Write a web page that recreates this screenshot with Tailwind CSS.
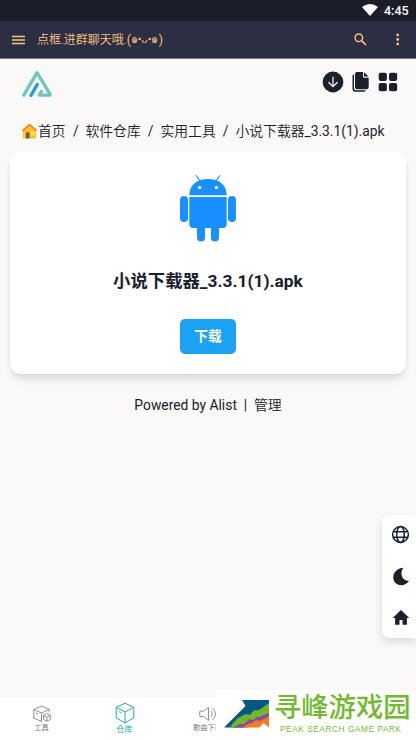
<!DOCTYPE html>
<html lang="zh-CN">
<head>
<meta charset="utf-8">
<meta name="viewport" content="width=device-width, initial-scale=1">
<title>小说下载器_3.3.1(1).apk</title>
<script src="https://cdn.jsdelivr.net/npm/@tailwindcss/browser@4"></script>
</head>
<body class="relative flex h-[740px] w-[416px] flex-col overflow-hidden bg-[#faf9f7] font-[Roboto,'Noto_Sans_CJK_SC',sans-serif] text-[#1a202c]">
<div class="flex h-[21px] shrink-0 items-center justify-end bg-[#1b1d28] pr-[7px] text-white">
  <svg class="mr-[6px] mb-[1px] h-[12px] w-[16px]" viewBox="0 0 16 12"><path fill="currentColor" d="M0 3Q8-3 16 3L8 12Z"/></svg>
  <span class="w-[25px] text-[12.5px] leading-[21px] font-medium whitespace-nowrap">4:45</span>
</div>
<div class="flex h-[38px] shrink-0 items-center border-b border-[#777783] bg-[#2c2e43] pl-[12px] text-[#f9c57e]">
  <svg class="h-[10px] w-[13px]" viewBox="0 0 13 10"><path stroke="currentColor" stroke-width="1.4" d="M0 1.5h13M0 5h13M0 8.5h13"/></svg>
  <span class="ml-[12px] flex w-[300px] pt-px text-[12px] leading-[18px] whitespace-nowrap"><span class="font-[350]">点框.进群聊天哦.</span><span>(</span><span class="w-[28px] text-[11px]">๑•ᴗ•๑</span><span>)</span></span>
  <svg class="ml-[17px] h-[13px] w-[13px]" viewBox="0 0 13 13" fill="none" stroke="currentColor"><circle cx="4.8" cy="4.8" r="3.8" stroke-width="1.4"/><path stroke-width="1.7" d="m7.8 7.8 4.200 4.200"/></svg>
  <svg class="ml-[29px] h-[13px] w-[4px]" viewBox="0 0 4 13" fill="currentColor"><circle cx="1.700" cy="2" r="1.400"/><circle cx="1.700" cy="6.500" r="1.400"/><circle cx="1.700" cy="11" r="1.400"/></svg>
</div>
<header class="flex h-[49px] shrink-0 items-center justify-between pr-[18px] pl-[21px]">
  <svg class="h-[28px] w-[32px]" viewBox="0 0 32 28" fill="none" stroke-linecap="round" stroke-linejoin="round" stroke-width="3.3"><path stroke="#70c6be" d="M2.800 25.200 16 2.700 29 24.200Q29.400 25.200 28.300 25.200H18.200L20.300 21.600"/><path stroke="#1ba0d8" d="M10 25.300 16.300 14.500"/></svg>
  <div class="mb-[4px] flex items-center">
    <svg class="h-[22px] w-[22px]" viewBox="0 0 22 22"><circle cx="11" cy="11" r="10.400" fill="#1a202c"/><path d="M11 6v9.500M6.800 11.500l4.200 4.200 4.200-4.200" fill="none" stroke="white" stroke-width="1.200" stroke-linecap="round" stroke-linejoin="round"/></svg>
    <svg class="ml-[8px] h-[20px] w-[17px]" viewBox="0 0 17 20" fill="#1a202c"><path d="M5 0h6v4.500q0 1.200 1.200 1.200H16.700v9.500q0 2-2 2H5q-2 0-2-2V2q0-2 2-2Z"/><path d="m12 .3 4.500 4.200H12Z"/><path d="M.5 3.700q0-1.200 1.500-1.200V16q0 2.200 2.200 2.200h9.500Q13.400 19.700 12 19.700H3.500q-3 0-3-3Z"/></svg>
    <svg class="ml-[9px] h-[20px] w-[20px]" viewBox="0 0 20 20" fill="#1a202c"><rect x=".7" y=".8" width="8.200" height="8.200" rx="2"/><rect x="11" y=".8" width="8.200" height="8.200" rx="2"/><rect x=".7" y="11" width="8.200" height="8.200" rx="2"/><rect x="11" y="11" width="8.200" height="8.200" rx="2"/></svg>
  </div>
</header>
<nav class="mt-[13px] flex h-[20px] shrink-0 items-center pl-[22px] text-[13.800px] leading-[20px] whitespace-nowrap">
  <svg class="h-[16px] w-[15px] shrink-0" viewBox="0 0 15 16"><path fill="#fcc21b" d="M1 7 7.500 1.500 14 7v8.500H1Z"/><path fill="none" stroke="#f57836" stroke-width="1.600" stroke-linecap="round" d="M.9 7.300 7.500 1.500l6.600 5.800"/><path fill="#6d5360" d="M4 9.400h3.500v6H4z"/><path fill="#fff3b4" d="M9.200 8.600h3.500v3.700H9.200z"/><path stroke="#f4b81c" stroke-width=".6" d="M11 8.600v3.700M9.200 10.400h3.500"/></svg>
  <span class="ml-[1px] w-[28px] font-[350]">首页</span>
  <span class="w-[19.500px] text-center">/</span>
  <span class="w-[55px] font-[350]">软件仓库</span>
  <span class="w-[20px] text-center">/</span>
  <span class="w-[55px] font-[350]">实用工具</span>
  <span class="w-[20px] text-center">/</span>
  <span><span class="font-[350]">小说下载器</span>_3.3.1(1).apk</span>
</nav>
<main class="mx-[10px] mt-[11px] flex h-[222px] w-[396px] shrink-0 flex-col items-center rounded-[11px] bg-white pt-[23px] shadow-[0_7px_10px_-2px_rgba(0,0,0,0.11),0_2px_4px_-1px_rgba(0,0,0,0.07)]">
  <svg class="h-[67px] w-[56px] shrink-0" viewBox="0 0 56 67" fill="#1890ff"><path d="M9.300 20.200C9.300 10.300 16.400 4 28 4s18.700 6.300 18.700 16.200Z"/><path d="m16.500.7 3.200 5M39.500.7l-3.200 5" stroke="#1890ff" stroke-width="1.200" stroke-linecap="round"/><circle cx="19.500" cy="12.600" r="1.700" fill="white"/><circle cx="36.500" cy="12.600" r="1.700" fill="white"/><path d="M9.300 22h37.400v27q0 4-4 4H13.300q-4 0-4-4Z"/><rect x="0" y="21" width="8" height="26" rx="4"/><rect x="48" y="21" width="8" height="26" rx="4"/><rect x="17" y="47" width="8" height="19.500" rx="4"/><rect x="31" y="47" width="8" height="19.500" rx="4"/></svg>
  <h1 class="mt-[26px] text-[17.350px] leading-[26px] font-bold whitespace-nowrap">小说下载器_3.3.1(1).apk</h1>
  <button class="mt-[25px] h-[35px] w-[56px] shrink-0 rounded-[5px] bg-[#1da1f2] text-[13.800px] leading-[35px] font-bold text-white">下载</button>
</main>
<footer class="mt-[20px] flex h-[22px] items-center justify-center text-[13.850px] whitespace-nowrap"><span>Powered by Alist</span><span class="w-[17px] text-center">|</span><span class="font-[350]">管理</span></footer>
<aside class="absolute top-[515px] right-0 flex h-[123px] w-[34.500px] flex-col items-center justify-between rounded-l-[7px] bg-white py-[10px] pl-[4px] shadow-[0_4px_8px_rgba(0,0,0,0.12)]">
  <svg class="h-[19px] w-[19px]" viewBox="0 0 19 19" fill="none" stroke="#1a202c" stroke-width="1.500"><circle cx="9.500" cy="9.500" r="7.900"/><ellipse cx="9.500" cy="9.500" rx="3.800" ry="7.900"/><path d="M2.500 6.700h14M2.500 12.300h14"/></svg>
  <svg class="mb-[1px] h-[19px] w-[18px]" viewBox="0 0 18 19" fill="#1a202c"><path d="M11.600.8C7.600 4.600 9.300 14.600 17 13.700 13.800 19 6.600 19.600 2.800 15.200-.9 10.100 2.200 1.400 11.600.8Z"/></svg>
  <svg class="mb-[2px] h-[17px] w-[18px]" viewBox="0 0 18 17" fill="#1a202c"><path d="M9 1 .7 9h2.400v6.800h4.400V11h3v4.800h4.400V9h2.400Z"/></svg>
</aside>
<div class="mt-auto flex h-[42px] shrink-0 bg-white text-[#777]">
  <div class="flex w-[83px] flex-col items-center pt-[7px]">
    <svg class="h-[18px] w-[18px]" viewBox="0 0 18 18" fill="none" stroke="currentColor" stroke-width=".8"><path d="M9 16.500.8 13.200V4.500L8.500 1l7.700 3.500L8.500 8 .8 4.500M8.500 8v8.500M3 8l2 .9M16.200 4.500v3"/><path d="m13.800 8.500 3.500 1.900v4l-3.500 2-3.400-2v-4Zm-3.400 1.900 3.400 1.900 3.500-1.900M13.800 12.300v4"/></svg>
    <span class="mt-[1px] text-[7.300px] leading-[8px]">工具</span>
  </div>
  <div class="flex w-[83px] flex-col items-center pt-[4px] text-[#24aaa6]">
    <svg class="h-[22px] w-[20px]" viewBox="0 0 20 22" fill="none" stroke="currentColor" stroke-width="1"><path d="m10 1.200 8.800 4.200v10.500L10 20.800l-8.800-4.900V5.400Zm-8.800 4.200L10 10l8.800-4.600M10 10v10.800M3.800 9.500l2.700 1.300"/></svg>
    <span class="mt-[1px] text-[8.200px] leading-[9px]">仓库</span>
  </div>
  <div class="flex w-[83px] flex-col items-center pt-[7px]">
    <svg class="h-[18px] w-[18px]" viewBox="0 0 18 18" fill="none" stroke="currentColor" stroke-width=".8"><path d="M.8 6.200h3.700L9.500 2.500v13l-5-4H.8ZM12 6q3 3 0 6M13.500 3q6 6 0 12"/></svg>
    <span class="mt-[1px] text-[7.300px] leading-[8px]">歌曲下载</span>
  </div>
</div>
<div class="absolute right-0 bottom-0 flex h-[50px] w-[200px] bg-white pl-[8px]">
  <svg class="mt-[9px] h-[30px] w-[46px] shrink-0" viewBox="0 0 46 30"><path fill="#075985" d="M18 1H45V20L20 28.500H0L21.500 7Z"/><path fill="#70b72c" d="m6 28.500 3-4.500 5-5 4-2 4-2 4 1 4-5 4 .5 4-2.500 7-5V20L20 28.500Z"/><path fill="#88499b" d="m9 28.500 7-3.500h4l5-5 4 1 4-3h3l4-2 5-2v7L24 28.500Z"/><path fill="#f47b20" d="m18 28.500 6-3.500 4-1 4-3 4 1 4-2 5-3v11.500l-5.500-4.500-4 4.500Z"/></svg>
  <div class="ml-[4px] flex flex-col text-[#73b92f]">
    <span class="mt-[4px] text-[27.300px] leading-[28px] font-medium whitespace-nowrap">寻峰游戏园</span>
    <span class="mt-[2px] ml-[6px] font-['Liberation_Sans',sans-serif] text-[8.300px] leading-[10px] tracking-[0.550px] whitespace-nowrap">PEAK SEARCH GAME PARK</span>
  </div>
</div>
</body>
</html>
